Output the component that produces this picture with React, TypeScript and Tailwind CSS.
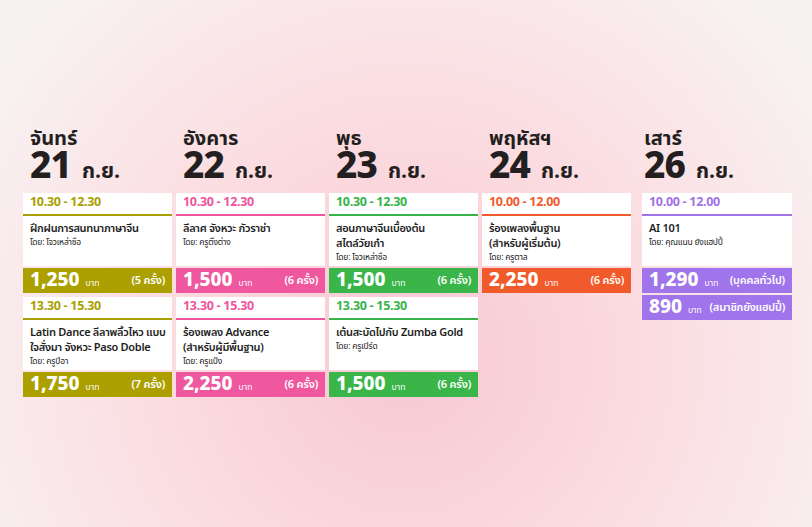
import React from "react";

type Session = {
  time: string;
  title: string[];
  teacher: string;
  prices: { amount: string; note: string }[];
};

type Day = {
  name: string;
  date: string;
  text: string;
  border: string;
  bg: string;
  sessions: Session[];
};

const DAYS: Day[] = [
  {
    name: "จันทร์",
    date: "21",
    text: "text-[#a99f00]",
    border: "border-[#a99f00]",
    bg: "bg-[#aba000]",
    sessions: [
      {
        time: "10.30 - 12.30",
        title: ["ฝึกฝนการสนทนาภาษาจีน"],
        teacher: "โดย: โจวเหล่าซือ",
        prices: [{ amount: "1,250", note: "(5 ครั้ง)" }],
      },
      {
        time: "13.30 - 15.30",
        title: ["Latin Dance ลีลาพลิ้วไหว แบบ", "ใจสั่งมา จังหวะ Paso Doble"],
        teacher: "โดย: ครูปีอา",
        prices: [{ amount: "1,750", note: "(7 ครั้ง)" }],
      },
    ],
  },
  {
    name: "อังคาร",
    date: "22",
    text: "text-[#ee559d]",
    border: "border-[#ee559d]",
    bg: "bg-[#ef579f]",
    sessions: [
      {
        time: "10.30 - 12.30",
        title: ["ลีลาศ จังหวะ กัวราช่า"],
        teacher: "โดย: ครูติ๊งต่าง",
        prices: [{ amount: "1,500", note: "(6 ครั้ง)" }],
      },
      {
        time: "13.30 - 15.30",
        title: ["ร้องเพลง Advance", "(สำหรับผู้มีพื้นฐาน)"],
        teacher: "โดย: ครูแป้ง",
        prices: [{ amount: "2,250", note: "(6 ครั้ง)" }],
      },
    ],
  },
  {
    name: "พุธ",
    date: "23",
    text: "text-[#36b34a]",
    border: "border-[#36b34a]",
    bg: "bg-[#3ab54a]",
    sessions: [
      {
        time: "10.30 - 12.30",
        title: ["สอนภาษาจีนเบื้องต้น", "สไตล์วัยเก๋า"],
        teacher: "โดย: โจวเหล่าซือ",
        prices: [{ amount: "1,500", note: "(6 ครั้ง)" }],
      },
      {
        time: "13.30 - 15.30",
        title: ["เต้นสะบัดไปกับ Zumba Gold"],
        teacher: "โดย: ครูเปิร์ด",
        prices: [{ amount: "1,500", note: "(6 ครั้ง)" }],
      },
    ],
  },
  {
    name: "พฤหัสฯ",
    date: "24",
    text: "text-[#f15a2b]",
    border: "border-[#f15a2b]",
    bg: "bg-[#f15a2b]",
    sessions: [
      {
        time: "10.00 - 12.00",
        title: ["ร้องเพลงพื้นฐาน", "(สำหรับผู้เริ่มต้น)"],
        teacher: "โดย: ครูตาล",
        prices: [{ amount: "2,250", note: "(6 ครั้ง)" }],
      },
    ],
  },
  {
    name: "เสาร์",
    date: "26",
    text: "text-[#9f72e8]",
    border: "border-[#9f72e8]",
    bg: "bg-[#a074ea]",
    sessions: [
      {
        time: "10.00 - 12.00",
        title: ["AI 101"],
        teacher: "โดย: คุณแนน ยังแฮปปี้",
        prices: [
          { amount: "1,290", note: "(บุคคลทั่วไป)" },
          { amount: "890", note: "(สมาชิกยังแฮปปี้)" },
        ],
      },
    ],
  },
];

function SessionCard({ day, session }: { day: Day; session: Session }) {
  return (
    <div className="flex flex-col gap-[2px]">
      <div className="bg-white">
        {/* เวลา */}
        <div className={`h-[23px] flex items-center px-[7px] border-b-2 ${day.border}`}>
          <span className={`text-[12.5px] font-bold leading-none tracking-[-0.3px] ${day.text}`}>{session.time}</span>
        </div>
        {/* ชื่อคอร์ส */}
        <div className="h-[50px] px-[7px] pt-[5px] text-[#1d1d1d]">
          {session.title.map((line) => (
            <div key={line} className="text-[11px] font-semibold leading-[15px] tracking-[-0.3px] whitespace-nowrap">
              {line}
            </div>
          ))}
          <div className="text-[8.5px] leading-[12px] mt-[1px] tracking-[-0.2px]">{session.teacher}</div>
        </div>
      </div>
      {session.prices.map((p) => (
        <div key={p.amount} className={`h-[25px] flex items-center justify-between px-[7px] text-white ${day.bg}`}>
          <div className="flex items-baseline gap-[6px]">
            <span className="text-[19px] font-extrabold leading-none">{p.amount}</span>
            <span className="text-[8.5px] leading-none">บาท</span>
          </div>
          <span className="text-[11px] font-semibold leading-none tracking-[-0.2px]">{p.note}</span>
        </div>
      ))}
    </div>
  );
}

export default function App() {
  return (
    <div className="w-[812px] h-[527px] overflow-hidden bg-[radial-gradient(ellipse_62%_95%_at_50%_68%,#f8c8d2_0%,#fbdfe3_55%,#f8f3f3_100%)] font-['Noto_Sans_Thai','Noto_Sans',sans-serif]">
      <div className="flex gap-[4px] pl-[23px] pt-[128px]">
        {DAYS.map((day, i) => (
          <div key={day.date} className={i === 4 ? "ml-[7px] w-[150px]" : "w-[149px]"}>
            {/* หัวข้อวัน */}
            <div className={`h-[65px] ${i === 4 ? "pl-[2px]" : "pl-[7px]"} text-[#231f20]`}>
              <div className="text-[20px] font-bold leading-[22px]">{day.name}</div>
              <div className="flex items-baseline gap-[11px] mt-[2px]">
                <span className="text-[37px] font-extrabold leading-[30px] tracking-tight">{day.date}</span>
                <span className="text-[21px] font-bold leading-[20px]">ก.ย.</span>
              </div>
            </div>
            <div className="flex flex-col gap-[4px]">
              {day.sessions.map((s) => (
                <SessionCard key={s.time} day={day} session={s} />
              ))}
            </div>
          </div>
        ))}
      </div>
    </div>
  );
}
